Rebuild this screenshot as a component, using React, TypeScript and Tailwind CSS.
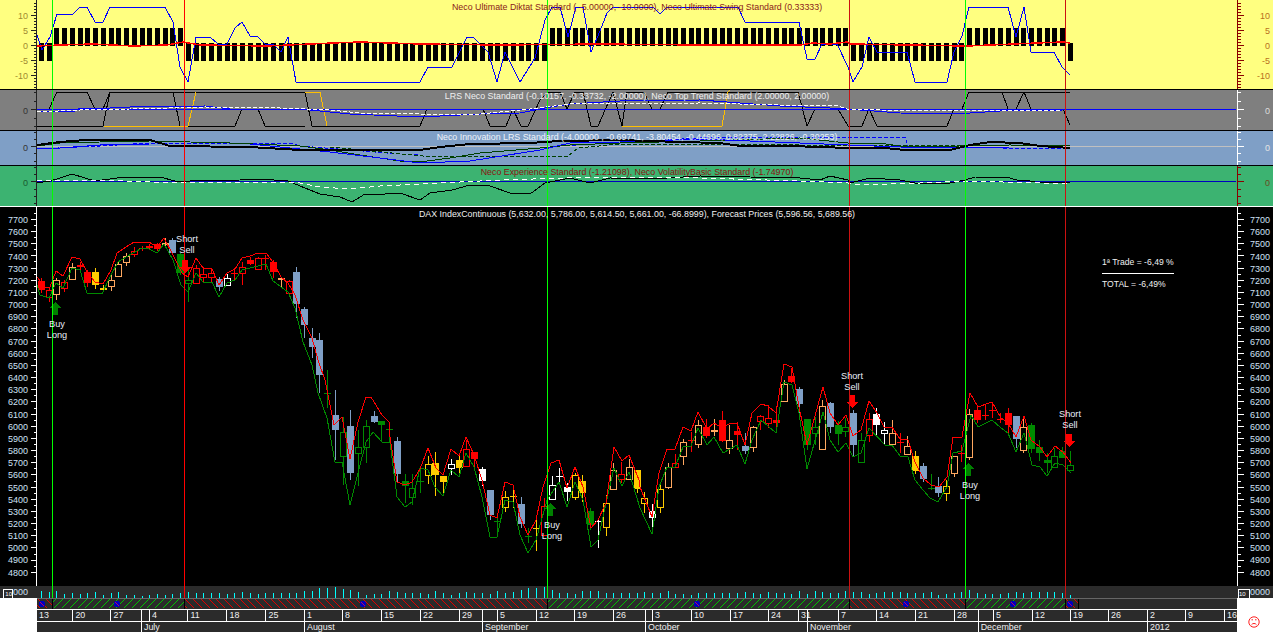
import type { ReactNode } from "react";

const X0 = 41;
const STEP = 7.735;
const cx = (i: number) => Math.round(X0 + STEP * i) + 0.5;

const GREEN = "#00ff00";
const SIGNALS: [number, string][] = [
  [52, GREEN],
  [184, "#ff0000"],
  [547, GREEN],
  [849, "#cc1111"],
  [965, GREEN],
  [1065, "#cc1111"],
];

// type, body top, body bottom, wick top, wick bottom (page pixels)
type Candle = [string, number, number, number, number];
const CANDLES: Candle[] = [
  ["r", 281, 290, 278, 293], ["R", 290, 297, 287, 302], ["o", 280, 294, 278, 300], ["R", 282, 288, 280, 292],
  ["o", 267, 279, 263, 280], ["r", 265, 267, 262, 270], ["r", 272, 283, 270, 287], ["y", 272, 285, 268, 289],
  ["y", 288, 290, 285, 292], ["o", 280, 286, 275, 291], ["o", 264, 276, 262, 277], ["o", 256, 262, 253, 266],
  ["R", 251, 254, 247, 257], ["r", 248, 249, 246, 251], ["r", 246, 248, 244, 250], ["r", 244, 249, 243, 251],
  ["o", 243, 244, 238, 248], ["b", 240, 253, 238, 253], ["g", 254, 273, 253, 275], ["G", 280, 283, 268, 302],
  ["R", 268, 283, 265, 284], ["R", 274, 277, 267, 283], ["R", 273, 277, 268, 282], ["b", 279, 287, 277, 291],
  ["W", 278, 285, 274, 285], ["r", 273, 274, 268, 280], ["R", 267, 273, 262, 285], ["r", 260, 264, 257, 265],
  ["R", 258, 269, 257, 270], ["r", 258, 259, 255, 270], ["r", 262, 272, 260, 278], ["o", 278, 279, 277, 288],
  ["R", 281, 293, 280, 295], ["b", 272, 304, 267, 318], ["b", 309, 325, 307, 338], ["b", 338, 347, 328, 358],
  ["b", 340, 375, 333, 393], ["g", 393, 394, 370, 408], ["b", 415, 430, 390, 460], ["G", 432, 456, 417, 485],
  ["b", 426, 473, 410, 480], ["G", 447, 453, 430, 486], ["G", 426, 447, 420, 463], ["b", 416, 422, 411, 423],
  ["g", 421, 425, 421, 442], ["g", 429, 430, 423, 442], ["b", 441, 474, 437, 482], ["g", 481, 486, 474, 503],
  ["G", 488, 497, 474, 505], ["g", 481, 482, 467, 493], ["Y", 464, 475, 456, 484], ["y", 463, 475, 452, 496],
  ["y", 476, 482, 476, 494], ["W", 464, 468, 459, 475], ["y", 460, 468, 453, 475], ["R", 449, 466, 440, 466],
  ["r", 452, 459, 452, 468], ["w", 469, 481, 467, 486], ["b", 490, 515, 490, 520], ["g", 521, 522, 515, 537],
  ["Y", 497, 507, 491, 512], ["y", 496, 497, 488, 508], ["b", 504, 524, 497, 528], ["g", 536, 537, 528, 543],
  ["y", 528, 529, 519, 551], ["R", 506, 535, 498, 536], ["W", 485, 499, 476, 499], ["w", 476, 477, 468, 483],
  ["w", 487, 492, 483, 501], ["Y", 475, 497, 473, 500], ["y", 481, 493, 475, 502], ["g", 511, 525, 508, 530],
  ["w", 521, 522, 519, 548], ["Y", 503, 527, 495, 536], ["o", 470, 489, 463, 489], ["R", 474, 479, 462, 483],
  ["o", 467, 479, 459, 480], ["y", 470, 489, 470, 493], ["Y", 498, 503, 492, 513], ["w", 511, 518, 504, 529],
  ["Y", 489, 507, 482, 513], ["o", 467, 487, 463, 489], ["R", 463, 467, 454, 467], ["o", 442, 456, 439, 465],
  ["r", 440, 441, 432, 452], ["o", 425, 444, 420, 448], ["r", 427, 436, 419, 438], ["o", 430, 431, 419, 436],
  ["r", 420, 441, 411, 442], ["o", 440, 448, 425, 454], ["r", 431, 435, 422, 450], ["b", 446, 451, 433, 454],
  ["o", 427, 447, 426, 452], ["R", 416, 421, 415, 430], ["R", 418, 423, 405, 428], ["r", 420, 423, 406, 433],
  ["o", 384, 401, 380, 402], ["r", 376, 382, 368, 383], ["b", 389, 404, 387, 413], ["g", 419, 445, 419, 450],
  ["G", 427, 433, 417, 445], ["o", 406, 449, 400, 449], ["b", 403, 427, 402, 433], ["g", 425, 434, 421, 445],
  ["G", 427, 431, 418, 437], ["b", 413, 445, 410, 457], ["G", 440, 462, 433, 462], ["R", 419, 435, 413, 442],
  ["w", 414, 425, 408, 437], ["W", 430, 433, 422, 445], ["o", 433, 444, 420, 444], ["r", 442, 443, 433, 453],
  ["o", 446, 454, 436, 455], ["y", 456, 471, 451, 474], ["b", 466, 479, 463, 482], ["g", 488, 489, 474, 490],
  ["b", 486, 493, 477, 497], ["Y", 486, 493, 480, 501], ["o", 456, 473, 456, 477], ["r", 453, 454, 445, 462],
  ["o", 414, 457, 409, 460], ["r", 410, 420, 407, 423], ["r", 415, 416, 404, 420], ["r", 410, 411, 402, 418],
  ["r", 419, 420, 413, 423], ["r", 413, 425, 408, 433], ["b", 416, 439, 416, 448], ["o", 427, 450, 417, 453],
  ["g", 425, 449, 423, 453], ["g", 447, 453, 440, 461], ["g", 460, 463, 453, 473], ["G", 456, 467, 448, 467],
  ["g", 451, 458, 447, 458], ["G", 465, 470, 451, 470],
];

const FILL: Record<string, string> = { r: "#ff0000", y: "#ffcc00", b: "#7f9fc6", g: "#008a00", w: "#ffffff" };
const HOLLOW: Record<string, string> = { R: "#ff0000", o: "#ffa860", Y: "#ffcc00", G: "#008a00", W: "#ffffff" };

const RED_LINE =
  "37,277 45,287 50,287 56,271 63,276 72,257 80,259 87,272 95,282 103,284 111,270 117,253 126,247 134,242 149,242 157,247 164,238 173,255 182,273 188,277 196,258 203,268 212,269 219,285 227,273 235,269 242,258 250,256 258,253 266,253 273,262 281,277 288,283 295,295 303,320 312,338 318,360 325,380 334,425 342,417 350,459 358,422 366,397 371,397 382,415 389,422 390,437 397,482 405,485 412,482 420,469 428,448 436,468 443,475 451,449 459,456 466,437 474,455 482,480 490,515 497,518 505,482 513,485 520,517 528,535 536,520 543,487 551,463 559,460 567,488 575,467 583,487 591,528 598,520 606,503 614,447 622,461 629,455 639,480 640,487 652,517 659,473 667,449 675,449 683,427 691,431 698,412 707,429 714,423 722,428 729,424 737,423 745,445 752,413 761,404 768,406 776,413 784,364 792,367 799,407 807,445 823,387 830,413 838,425 846,415 853,436 861,430 869,401 877,413 884,427 892,427 900,439 908,440 915,462 923,478 931,485 939,487 947,477 953,437 962,437 970,393 978,407 992,402 1001,418 1008,423 1016,437 1024,416 1031,440 1040,447 1047,457 1055,446 1063,452 1071,463";
const GREEN_LINE =
  "37,285 40,295 49,298 56,283 63,288 72,268 80,270 87,293 95,293 102,294 110,277 118,262 126,257 142,248 149,249 157,253 164,244 173,260 181,285 188,292 196,273 203,282 212,282 219,297 227,283 235,280 242,270 266,264 273,281 288,292 295,308 303,342 312,365 318,393 327,418 335,462 342,462 350,505 358,473 366,442 373,432 382,442 390,442 397,497 405,507 412,502 420,468 428,470 435,487 443,496 451,470 459,477 466,453 474,467 482,497 490,537 497,537 505,500 513,502 520,535 528,553 536,540 547,500 559,482 567,507 575,482 583,500 591,547 598,540 606,503 614,468 622,486 629,472 640,508 652,534 659,487 667,467 675,467 683,447 691,446 698,428 707,445 714,437 723,453 737,445 745,464 752,440 761,420 768,426 776,433 784,382 792,385 799,413 807,469 823,412 830,440 838,452 846,443 853,457 861,453 869,428 885,445 892,445 900,456 908,457 915,480 923,490 930,498 938,502 947,487 953,453 962,451 971,415 978,427 992,420 1001,428 1008,433 1016,452 1024,433 1032,465 1040,467 1047,476 1055,463 1063,465 1071,473";

const SWING =
  "37,35 42,50 50,37 57,14 73,14 80,7 87,7 95,22 103,22 110,7 165,7 173,22 180,67 188,82 196,37 210,37 218,44 227,44 235,28 242,22 250,36 257,36 265,44 273,44 281,52 288,37 296,82 420,82 428,67 452,67 467,37 473,37 488,52 497,82 505,52 520,82 535,58 545,20 552,7 560,7 568,37 576,7 583,7 591,52 598,36 607,13 613,7 653,7 660,14 667,7 738,7 745,22 799,22 807,59 815,59 822,44 837,44 848,67 853,82 862,67 869,37 877,52 907,52 915,82 947,82 954,52 962,36 969,7 1008,7 1016,37 1024,7 1031,52 1054,52 1062,67 1070,75";
const DIKTAT =
  "37,46 60,45 93,44 133,46 167,45 183,42 200,45 267,46 333,43 360,42 420,44 500,45 600,44 700,45 800,45 813,43 830,44 847,42 850,44 967,46 1037,43 1063,42 1070,43";

const VOLUMES = [
  6, 5, 6, 3, 4, 3, 4, 5, 2, 4, 5, 2, 2, 1, 2, 3, 2, 3, 4, 5, 4, 4, 4, 4, 3, 4, 5, 4, 3, 4, 4, 4, 4, 4, 6, 6, 9, 9, 10,
  8, 7, 5, 2, 3, 3, 6, 5, 4, 4, 4, 3, 6, 4, 2, 4, 5, 4, 4, 3, 6, 4, 5, 7, 9, 9, 10, 7, 4, 4, 3, 6, 6, 6, 4, 4, 4, 4, 4,
  5, 4, 4, 6, 3, 3, 2, 4, 4, 4, 4, 4, 4, 5, 4, 3, 5, 4, 4, 3, 6, 3, 6, 5, 4, 4, 6, 5, 5, 3, 4, 5, 5, 5, 4, 4, 4, 5, 2,
  3, 4, 5, 7, 4, 3, 3, 3, 4, 5, 4, 5, 5, 5, 5, 4, 2,
];

const DATES: [number, string][] = [
  [37, "13"], [72.4, "20"], [110.5, "27"], [141, ""], [149, "4"], [187.5, "11"], [226.5, "18"], [265.5, "25"],
  [304, "1"], [342, "8"], [381, "15"], [420, "22"], [459, "29"], [482, ""], [497, "5"], [536, "12"], [574, "19"],
  [613, "26"], [645, ""], [652, "3"], [691, "10"], [730, "17"], [768, "24"], [798, "31"], [807, ""], [838, "7"],
  [876, "14"], [915, "21"], [954, "28"], [977.7, ""], [993, "5"], [1032, "12"], [1070, "19"], [1108, "26"],
  [1147, "2"], [1185, "9"], [1224, "16"],
];
const MONTHS: [number, string][] = [
  [37, ""], [141, "July"], [304, "August"], [482, "September"], [645, "October"], [807, "November"],
  [977.7, "December"], [1147, "2012"],
];
const HATCH: [number, number, string][] = [
  [37, 52, "r"], [52, 184, "g"], [184, 547, "r"], [547, 849, "g"], [849, 965, "r"], [965, 1065, "g"], [1065, 1078, "r"],
];
const PRICES = Array.from({ length: 30 }, (_, i) => 7700 - i * 100);
const PRICE_MAJOR = PRICES.map((_, i) => 12.4 + i * 12.17);
const PRICE_MINOR = PRICES.map((_, i) => 6.3 + i * 12.17);

function range(from: number, to: number, step: number) {
  const out: number[] = [];
  for (let v = from; v <= to; v += step) out.push(v);
  return out;
}

function Axis({ side, line, text, major, minor, height, labels, pad, rowH }: {
  side: "left" | "right";
  line: string;
  text: string;
  major: number[];
  minor: number[];
  height: number;
  labels: string[];
  pad: number;
  rowH: number;
}) {
  const left = side === "left";
  const base = left ? 36.5 : 0.5;
  const dir = left ? -1 : 1;
  return (
    <div className={`relative shrink-0 overflow-hidden text-[9px] text-right ${left ? "w-[37px] pr-[9px]" : "w-[36px] pr-[3px]"} ${text}`} style={{ height, paddingTop: pad }}>
      <svg className="absolute left-0 top-0" width={left ? 37 : 36} height={height} shapeRendering="crispEdges">
        <line x1={base} x2={base} y1={0} y2={height} stroke={line} />
        {major.map((y) => (
          <line key={y} x1={base} x2={base + dir * 6} y1={Math.floor(y) + 0.5} y2={Math.floor(y) + 0.5} stroke={line} />
        ))}
        {minor.map((y) => (
          <line key={y} x1={base} x2={base + dir * 3} y1={Math.floor(y) + 0.5} y2={Math.floor(y) + 0.5} stroke={line} />
        ))}
      </svg>
      <div className="flex flex-col">
        {labels.map((l) => (
          <div key={l} className="flex items-center justify-end leading-none" style={{ height: rowH }}>{l}</div>
        ))}
      </div>
    </div>
  );
}

function Chart({ top, height, children }: { top: number; height: number; children?: ReactNode }) {
  return (
    <svg className="block" width={1200} height={height} viewBox={`37 ${top} 1200 ${height}`} shapeRendering="crispEdges">
      {children}
      {SIGNALS.map(([x, c]) => (
        <line key={x} x1={x + 0.5} x2={x + 0.5} y1={top} y2={top + height} stroke={c} />
      ))}
    </svg>
  );
}

function Line({ d, c, w = 1, dash }: { d: string; c: string; w?: number; dash?: string }) {
  return <polyline points={d} fill="none" stroke={c} strokeWidth={w} strokeDasharray={dash} />;
}

function Title({ children, className }: { children: ReactNode; className: string }) {
  return (
    <div className={`absolute left-0 right-0 top-0 text-center text-[8.85px] leading-[12px] whitespace-nowrap ${className}`}>{children}</div>
  );
}

function Tag({ x, y, lines }: { x: number; y: number; lines: string[] }) {
  // trade signal caption, placed on the chart where the signal fired
  return (
    <div className="absolute -translate-x-1/2 text-center text-[9.2px] leading-[11px] text-[#e8eef8]" style={{ left: x - 37, top: y - 207 }}>
      {lines.map((l) => <div key={l}>{l}</div>)}
    </div>
  );
}

function Arrow({ x, y, up }: { x: number; y: number; up?: boolean }) {
  const d = up
    ? `${x},${y} ${x + 6},${y + 6} ${x + 3},${y + 6} ${x + 3},${y + 13} ${x - 3},${y + 13} ${x - 3},${y + 6} ${x - 6},${y + 6}`
    : `${x},${y + 13} ${x + 6},${y + 7} ${x + 3},${y + 7} ${x + 3},${y} ${x - 3},${y} ${x - 3},${y + 7} ${x - 6},${y + 7}`;
  return <polygon points={d} fill={up ? "#008000" : "#ff0000"} />;
}

function Candles() {
  return (
    <>
      {CANDLES.map(([t, top, bot, wt, wb], i) => {
        const x = cx(i);
        const fill = FILL[t];
        const col = fill ?? HOLLOW[t];
        return (
          <g key={i}>
            <line x1={x} x2={x} y1={wt} y2={wb} stroke={col} />
            {fill ? (
              <rect x={x - 3.5} y={top} width={7} height={Math.max(bot - top, 1)} fill={fill} />
            ) : (
              <rect x={x - 3} y={top + 0.5} width={6} height={Math.max(bot - top, 1)} fill="#000" stroke={col} />
            )}
          </g>
        );
      })}
    </>
  );
}

function DiktatBars() {
  return (
    <>
      {CANDLES.map((_, i) => {
        const up = (i >= 2 && i <= 18) || (i >= 66 && i <= 104) || (i >= 120 && i <= 132);
        return <rect key={i} x={cx(i) - 2.5} y={up ? 28 : 43} width={5} height={18} fill="#000" />;
      })}
    </>
  );
}

export default function App() {
  return (
    <div className="flex h-[632px] w-[1273px] flex-col overflow-hidden bg-white font-['Liberation_Sans',Arial,sans-serif]">
      {/* Diktat / Swing */}
      <div className="flex h-[90px] shrink-0 border-b border-black bg-[#ffff80]">
        <Axis side="left" line="#222" text="text-[#a08a30]" height={89} pad={8.5} rowH={15} labels={["10", "5", "0", "-5", "-10"]} major={[15, 30, 45, 60, 75]} minor={range(3, 87, 3)} />
        <div className="relative w-[1200px] shrink-0">
          <Chart top={0} height={89}>
            <DiktatBars />
            <Line d={SWING} c="#0000ff" />
            <Line d={DIKTAT} c="#ff0000" w={1.5} />
          </Chart>
          <Title className="pt-px text-[#8a1a1a]">Neco Ultimate Diktat Standard ( -5.00000, -10.0000), Neco Ultimate Swing Standard (0.33333)</Title>
        </div>
        <Axis side="right" line="#8b0000" text="text-[#b87020]" height={89} pad={8.5} rowH={15} labels={["10", "5", "0", "-5", "-10"]} major={[15, 30, 45, 60, 75]} minor={range(3, 87, 3)} />
      </div>

      {/* LRS / Top Trend */}
      <div className="flex h-[41px] shrink-0 border-b border-black bg-[#7f7f7f]">
        <Axis side="left" line="#222" text="text-[#333]" height={40} pad={15} rowH={12} labels={["0"]} major={[19.5]} minor={[2, 11, 28, 36]} />
        <div className="relative w-[1200px] shrink-0">
          <Chart top={90} height={40}>
            <Line c="#000" d="37,109 49,109 57,92 87,92 95,109 103,109 110,92 305,92 312,126 420,126 427,109 483,109 490,126 506,126 513,109 521,126 528,126 540,100 548,92 560,92 567,109 575,92 583,92 591,126 598,126 613,92 622,126 627,92 644,92 652,109 660,109 668,92 798,92 807,126 815,109 838,109 848,126 862,126 869,109 877,126 947,126 954,109 962,109 969,92 1002,92 1008,109 1016,109 1024,92 1031,109 1063,109 1070,125" />
            <Line c="#000" d="37,126 103,126 110,92 173,92 180,126 235,126 242,109 258,109 265,126 305,126" />
            <Line c="#000" d="969,92 1070,92" />
            <Line c="#ffc000" d="104,126 188,126 196,92" />
            <Line c="#ffc000" d="305,92 320,92 327,126" />
            <Line c="#ffc000" d="622,126 722,126 728,92 730,90" />
            <Line c="#0000ff" d="37,109.5 1236,109.5" />
            <Line c="#0000ff" d="37,111 75,111 80,108 110,108 130,107 205,106 230,109 300,109 330,112 350,114 420,117 480,114 520,113 545,108 570,104 620,101 700,100 780,106 830,108 847,109 900,113 950,114 970,113 1000,111 1063,110" />
            <Line c="#ffffff" dash="4 2" d="37,112 80,110 130,109 205,107 280,108 330,110 360,113 420,114 480,114 530,109 570,104 700,103 780,105 838,106 847,109 880,110 1060,111" />
          </Chart>
          <Title className="text-[#f0f0f0]">LRS Neco Standard (-0.10157, -0.33732, -2.00000), Neco Top Trend Standard (2.00000, 2.00000)</Title>
        </div>
        <Axis side="right" line="#fff" text="text-[#ddd]" height={40} pad={15} rowH={12} labels={["0"]} major={[19.5]} minor={[2, 11, 28, 36]} />
      </div>

      {/* Innovation */}
      <div className="flex h-[35px] shrink-0 border-b border-black bg-[#7f9fc6]">
        <Axis side="left" line="#222" text="text-[#333]" height={34} pad={11} rowH={12} labels={["0"]} major={[15.6]} minor={[1.3, 8.3, 22.6, 30]} />
        <div className="relative w-[1200px] shrink-0">
          <Chart top={131} height={34}>
            <Line c="#c0c0c0" d="37,146.5 1236,146.5" />
            <Line c="#0000ff" dash="4 2" d="37,149 100,146 150,143 290,143 300,146 400,154 420,155" />
            <Line c="#0000ff" dash="4 2" d="560,146 700,138 800,137 905,137 908,146 1000,148 1070,148" />
            <Line c="#004000" dash="4 2" d="330,147 423,156 568,156 578,148 620,144 700,144 800,145 900,146 1070,145" />
            <Line c="#004000" d="37,146 60,143 100,142 150,141 230,143 300,146 330,150 360,155 400,161 420,162 450,158 480,153 540,148 570,145 620,143 700,141 800,138 848,143 880,143 905,147 960,146 1010,145 1070,146" />
            <Line c="#0000ff" d="37,149 60,148 100,145 150,144 250,144 330,152 380,158 420,163 470,161 540,150 570,143 620,142 700,139 800,143 848,145 900,147 960,148 1010,147 1070,147" />
            <Line c="#000" w={2} d="37,145 60,142 85,140 150,140 170,146 250,147 300,150 420,150 440,147 470,144 530,143 560,141 620,140 680,142 720,143 740,146 790,146 850,148 885,148 905,150 950,150 970,145 990,142 1020,143 1040,146 1070,148" />
          </Chart>
          <Title className="text-[#f0f4fa]">Neco Innovation LRS Standard (-4.00000 , -0.69741, -3.80454, -0.44696, 0.82375, 2.22826, -0.30253)</Title>
        </div>
        <Axis side="right" line="#fff" text="text-[#e4e4e4]" height={34} pad={11} rowH={12} labels={["0"]} major={[15.6]} minor={[1.3, 8.3, 22.6, 30]} />
      </div>

      {/* Experience / Volatility */}
      <div className="flex h-[40px] shrink-0 bg-[#3cb371]">
        <Axis side="left" line="#222" text="text-[#1a5a30]" height={40} pad={11} rowH={12} labels={["0"]} major={[15.7]} minor={[1.7, 8.7, 23, 30, 37]} />
        <div className="relative w-[1200px] shrink-0">
          <Chart top={166} height={40}>
            <Line c="#0000c0" d="37,181.5 1236,181.5" />
            <Line c="#000" d="37,183 50,181 60,178 72,174 85,178 95,181 110,179 125,177 160,177 175,181 190,181 240,180 260,179 288,181 300,186 320,194 340,197 352,202 365,194 385,194 400,193 420,200 430,193 452,190 470,185 490,186 510,193 530,194 545,183 555,181 570,178 590,183 610,178 650,179 700,176 750,177 800,178 820,180 830,176 848,180 850,183 870,178 900,180 915,183 945,184 965,180 975,177 1010,178 1020,181 1025,180 1035,182 1070,183" />
            <Line c="#ffffff" dash="5 4" d="37,181 100,180 180,183 295,182 320,187 350,189 380,186 420,184 500,180 600,177 700,178 800,181 848,183 860,185 920,183 965,181 1040,183 1070,183" />
          </Chart>
          <Title className="text-[#8a1010]">Neco Experience Standard (-1.21098), Neco VolatilityBasic Standard (-1.74970)</Title>
        </div>
        <Axis side="right" line="#8b0000" text="text-[#6a4a20]" height={40} pad={11} rowH={12} labels={["0"]} major={[15.7]} minor={[1.7, 8.7, 23, 30, 37]} />
      </div>

      {/* Price */}
      <div className="flex h-[380px] shrink-0 border-t border-white bg-black">
        <Axis side="left" line="#fff" text="text-[#cfe0f5]" height={379} pad={7.5} rowH={12.17} labels={PRICES.map(String)} major={PRICE_MAJOR} minor={PRICE_MINOR} />
        <div className="relative w-[1200px] shrink-0">
          <Chart top={207} height={379}>
            <Candles />
            <Line d={GREEN_LINE} c="#008a00" />
            <Line d={RED_LINE} c="#ff0000" />
            <Arrow x={55} y={302} up />
            <Arrow x={185} y={260} />
            <Arrow x={550} y={503} up />
            <Arrow x={852} y={395} />
            <Arrow x={968} y={463} up />
            <Arrow x={1069} y={434} />
          </Chart>
          <Title className="pt-px text-[#f0f0f0]">DAX IndexContinuous (5,632.00, 5,786.00, 5,614.50, 5,661.00, -66.8999), Forecast Prices (5,596.56, 5,689.56)</Title>
          <Tag x={57} y={319} lines={["Buy", "Long"]} />
          <Tag x={187} y={234} lines={["Short", "Sell"]} />
          <Tag x={552} y={520} lines={["Buy", "Long"]} />
          <Tag x={852} y={371} lines={["Short", "Sell"]} />
          <Tag x={970} y={480} lines={["Buy", "Long"]} />
          <Tag x={1070} y={409} lines={["Short", "Sell"]} />
          <div className="absolute left-[1065px] top-[49px] w-[72px] text-[8.6px] leading-[12px] text-[#f0f0f0] whitespace-nowrap">
            <div>1ª Trade = -6,49 %</div>
            <div className="mt-[5px] h-px bg-white" />
            <div className="mt-[4px]">TOTAL = -6,49%</div>
          </div>
        </div>
        <Axis side="right" line="#fff" text="text-[#cfe0f5]" height={379} pad={7.5} rowH={12.17} labels={PRICES.map(String)} major={PRICE_MAJOR} minor={PRICE_MINOR} />
      </div>

      {/* Volume */}
      <div className="flex h-[12px] shrink-0 bg-[#2b2b2b] text-[9px] leading-[12px] text-[#cfe0f5]">
        <div className="relative w-[37px] shrink-0 pr-[9px] text-right">
          000
          <div className="absolute left-[3px] top-[3px] h-[9px] w-[10px] border border-b-0 border-white text-[6px] leading-[8px] text-white">10</div>
        </div>
        <div className="w-[1200px] shrink-0">
          <Chart top={586} height={12}>
            {VOLUMES.map((v, i) => (
              <line key={i} x1={cx(i)} x2={cx(i)} y1={597 - v} y2={598} stroke="#00ffff" />
            ))}
          </Chart>
        </div>
        <div className="relative w-[36px] shrink-0 pr-[3px] text-right">
          0000
          <div className="absolute left-[1px] top-[3px] h-[9px] w-[12px] border border-b-0 border-white text-left text-[6px] leading-[8px] text-white">10</div>
        </div>
      </div>

      {/* Time axis */}
      <div className="flex min-h-0 flex-1">
        <div className="w-[37px] shrink-0 bg-white" />
        <div className="w-[1200px] shrink-0 bg-[#2b2b2b] text-[8.9px] text-[#f0f0f0]">
          <svg className="block border-t border-b border-t-[#666] border-b-white" width={1200} height={12} viewBox="37 599 1200 10" shapeRendering="crispEdges">
            {HATCH.map(([a, b, k]) => (
              <svg key={a} x={a} y={599} width={b - a} height={10} viewBox={`${a} 599 ${b - a} 10`}>
                {range(a - 14, b + 14, 7.735).map((v) => {
                  const x = Math.round(v) + 0.5;
                  return k === "g"
                    ? <line key={v} x1={x} x2={x + 9} y1={608.5} y2={599.5} stroke="#00c000" />
                    : <line key={v} x1={x} x2={x + 9} y1={599.5} y2={608.5} stroke="#e00000" />;
                })}
              </svg>
            ))}
            {[52, 184, 547, 849, 965, 1065, 1078].map((x) => (
              <line key={x} x1={x + 0.5} x2={x + 0.5} y1={599} y2={609} stroke="#000" />
            ))}
            {[42, 117, 363, 697, 906, 1013, 1070].map((x) => (
              <g key={x}>
                <circle cx={x} cy={604} r={3} fill="#0000c0" />
                <line x1={x - 2} x2={x + 2} y1={602} y2={606} stroke="#c00060" />
              </g>
            ))}
          </svg>
          <div className="flex h-[12px] border-b border-white">
            {DATES.map(([x, label], i) => (
              <div key={x} className={`shrink-0 pl-[2px] leading-[11px] ${i ? "border-l border-white" : ""}`} style={{ width: (DATES[i + 1]?.[0] ?? 1237) - x }}>{label}</div>
            ))}
          </div>
          <div className="flex h-[10px] overflow-hidden">
            {MONTHS.map(([x, label], i) => (
              <div key={x} className={`shrink-0 pl-[2px] leading-[11px] ${i ? "border-l border-white" : ""}`} style={{ width: (MONTHS[i + 1]?.[0] ?? 1237) - x }}>{label}</div>
            ))}
          </div>
        </div>
        <div className="flex w-[36px] shrink-0 items-end bg-white pb-[4px] pl-[11px]">
          <svg width={12} height={12} viewBox="0 0 12 12" fill="none" stroke="#ff2020">
            <circle cx={6} cy={6} r={5.2} />
            <path d="M3.5 3.8h1.5M7 3.8h1.5M3.5 8.8c1-1.8 4-1.8 5 0" />
          </svg>
        </div>
      </div>
    </div>
  );
}
